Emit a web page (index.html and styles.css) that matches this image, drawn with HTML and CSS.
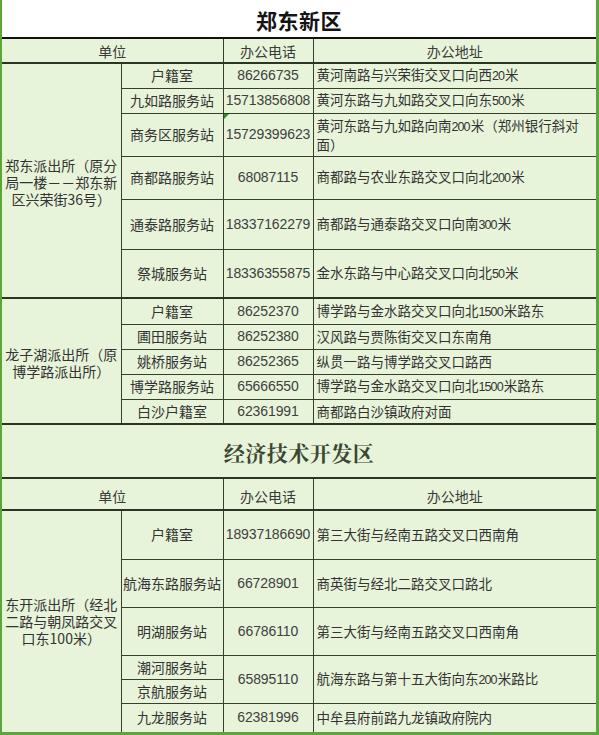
FILE: index.html
```html
<!DOCTYPE html>
<html lang="zh-CN">
<head>
<meta charset="utf-8">
<title>郑东新区 / 经济技术开发区 派出所办公电话</title>
<link rel="stylesheet" href="styles.css">
</head>
<body>
<div class="sheet">
<table class="grid">
  <colgroup>
    <col class="c1"><col class="c2"><col class="c3"><col class="c4">
  </colgroup>
  <tbody>
    <tr class="title-row first"><td colspan="4" class="title t1">郑东新区</td></tr>
    <tr class="head-row"><td colspan="2" class="head">单位</td><td class="head">办公电话</td><td class="head">办公地址</td></tr>

    <tr class="h25"><td rowspan="6" class="unit end">郑东派出所（原分局一楼－－郑东新区兴荣街36号）</td><td class="name">户籍室</td><td class="tel">86266735</td><td class="addr">黄河南路与兴荣街交叉口向西<span class="d">20</span>米</td></tr>
    <tr class="h25"><td class="name">九如路服务站</td><td class="tel">15713856808</td><td class="addr">黄河东路与九如路交叉口向东<span class="d">500</span>米</td></tr>
    <tr class="h43"><td class="name">商务区服务站</td><td class="tel flag">15729399623</td><td class="addr">黄河东路与九如路向南<span class="d">200</span>米（郑州银行斜对<br>面）</td></tr>
    <tr class="h43"><td class="name">商都路服务站</td><td class="tel">68087115</td><td class="addr">商都路与农业东路交叉口向北<span class="d">200</span>米</td></tr>
    <tr class="h50"><td class="name">通泰路服务站</td><td class="tel">18337162279</td><td class="addr">商都路与通泰路交叉口向南<span class="d">300</span>米</td></tr>
    <tr class="h49 end"><td class="name">祭城服务站</td><td class="tel">18336355875</td><td class="addr">金水东路与中心路交叉口向北<span class="d">50</span>米</td></tr>

    <tr class="h26"><td rowspan="5" class="unit end">龙子湖派出所（原博学路派出所）</td><td class="name">户籍室</td><td class="tel">86252370</td><td class="addr">博学路与金水路交叉口向北<span class="d">1500</span>米路东</td></tr>
    <tr class="h25"><td class="name">圃田服务站</td><td class="tel">86252380</td><td class="addr">汉风路与贾陈街交叉口东南角</td></tr>
    <tr class="h25"><td class="name">姚桥服务站</td><td class="tel">86252365</td><td class="addr">纵贯一路与博学路交叉口路西</td></tr>
    <tr class="h25"><td class="name">博学路服务站</td><td class="tel">65666550</td><td class="addr">博学路与金水路交叉口向北<span class="d">1500</span>米路东</td></tr>
    <tr class="h25 end"><td class="name">白沙户籍室</td><td class="tel">62361991</td><td class="addr">商都路白沙镇政府对面</td></tr>

    <tr class="title-row second"><td colspan="4" class="title t2">经济技术开发区</td></tr>
    <tr class="head-row tall"><td colspan="2" class="head">单位</td><td class="head">办公电话</td><td class="head">办公地址</td></tr>

    <tr class="h49"><td rowspan="6" class="unit last">东开派出所（经北二路与朝凤路交叉口东100米）</td><td class="name">户籍室</td><td class="tel">18937186690</td><td class="addr">第三大街与经南五路交叉口西南角</td></tr>
    <tr class="h48"><td class="name">航海东路服务站</td><td class="tel">66728901</td><td class="addr">商英街与经北二路交叉口路北</td></tr>
    <tr class="h48"><td class="name">明湖服务站</td><td class="tel">66786110</td><td class="addr">第三大街与经南五路交叉口西南角</td></tr>
    <tr class="h24"><td class="name">潮河服务站</td><td rowspan="2" class="tel">65895110</td><td rowspan="2" class="addr">航海东路与第十五大街向东<span class="d">200</span>米路比</td></tr>
    <tr class="h24"><td class="name">京航服务站</td></tr>
    <tr class="h29 last"><td class="name">九龙服务站</td><td class="tel">62381996</td><td class="addr">中牟县府前路九龙镇政府院内</td></tr>
  </tbody>
</table>
</div>
</body>
</html>
```

FILE: styles.css
```css
html, body {
  margin: 0;
  padding: 0;
}

body {
  background: #5ba53b;
  width: 599px;
  height: 735px;
  overflow: hidden;
  font-family: "Noto Sans CJK SC", "Liberation Sans", sans-serif;
  color: #333333;
}

.sheet {
  margin-left: 2px;
  width: 594px;
  background: #e7f4da;
}

.grid {
  border-collapse: collapse;
  table-layout: fixed;
  width: 594px;
}

.c1 { width: 119px; }
.c2 { width: 102px; }
.c3 { width: 90px; }
.c4 { width: 283px; }

.grid td {
  padding: 0 1px;
  border: 1px solid #34402b;
  vertical-align: middle;
  text-align: center;
  font-size: 14px;
  line-height: 17px;
  background: #e7f4da;
  white-space: normal;
}

.grid tr > td:first-child { border-left: none; }
.grid tr > td:last-child { border-right: none; }

/* title rows */
.title-row .title {
  border-left: none;
  border-right: none;
  border-top: none;
  border-bottom: 2px solid #2b3524;
}

.first { height: 38px; }
.first .title {
  background: #ffffff;
  border-bottom-color: #111111;
  font-size: 21px;
  font-weight: 700;
  color: #141414;
  padding-top: 3px;
  letter-spacing: 0.5px;
}

.second { height: 54px; }
.second .title {
  font-family: "Noto Serif CJK SC", "Noto Sans CJK SC", serif;
  font-size: 21px;
  font-weight: 700;
  color: #3b4732;
  letter-spacing: 0.5px;
  padding-top: 2px;
}

/* header rows */
.head-row { height: 25px; }
.head-row.tall { height: 32px; }
.head-row .head {
  border-bottom: 2px solid #2b3524;
  color: #3a3a3a;
  padding-top: 1px;
}
.head-row.tall .head {
  padding-top: 4px;
}

/* data rows */
.h24 { height: 24px; }
.h25 { height: 25px; }
.h26 { height: 26px; }
.h29 { height: 29px; }
.h43 { height: 43px; }
.h48 { height: 48px; }
.h49 { height: 49px; }
.h50 { height: 50px; }

.grid tr.end > td,
.grid td.unit.end {
  border-bottom: 2px solid #2b3524;
}

.grid tr.last > td,
.grid td.unit.last {
  border-bottom: none;
}

.unit {
  padding: 0 3px;
  color: #333333;
}

.grid td.unit.end {
  padding-top: 4px;
}

.name {
  color: #333333;
}

.tel {
  font-family: "Liberation Sans", "Noto Sans CJK SC", sans-serif;
  font-size: 12.5px;
  letter-spacing: -0.1px;
  color: #404040;
}

.grid td.addr {
  text-align: left;
  padding-left: 3px;
  padding-right: 2px;
  font-size: 13.5px;
  color: #333333;
}

.d {
  font-family: "Liberation Sans", sans-serif;
  font-size: 12.5px;
  letter-spacing: -0.9px;
  margin-right: 1px;
}

/* Excel error indicator on a cell */
.flag {
  position: relative;
}

.flag::before {
  content: "";
  position: absolute;
  top: 0;
  left: 0;
  border-top: 5px solid #2f8c2a;
  border-right: 5px solid transparent;
}
```
